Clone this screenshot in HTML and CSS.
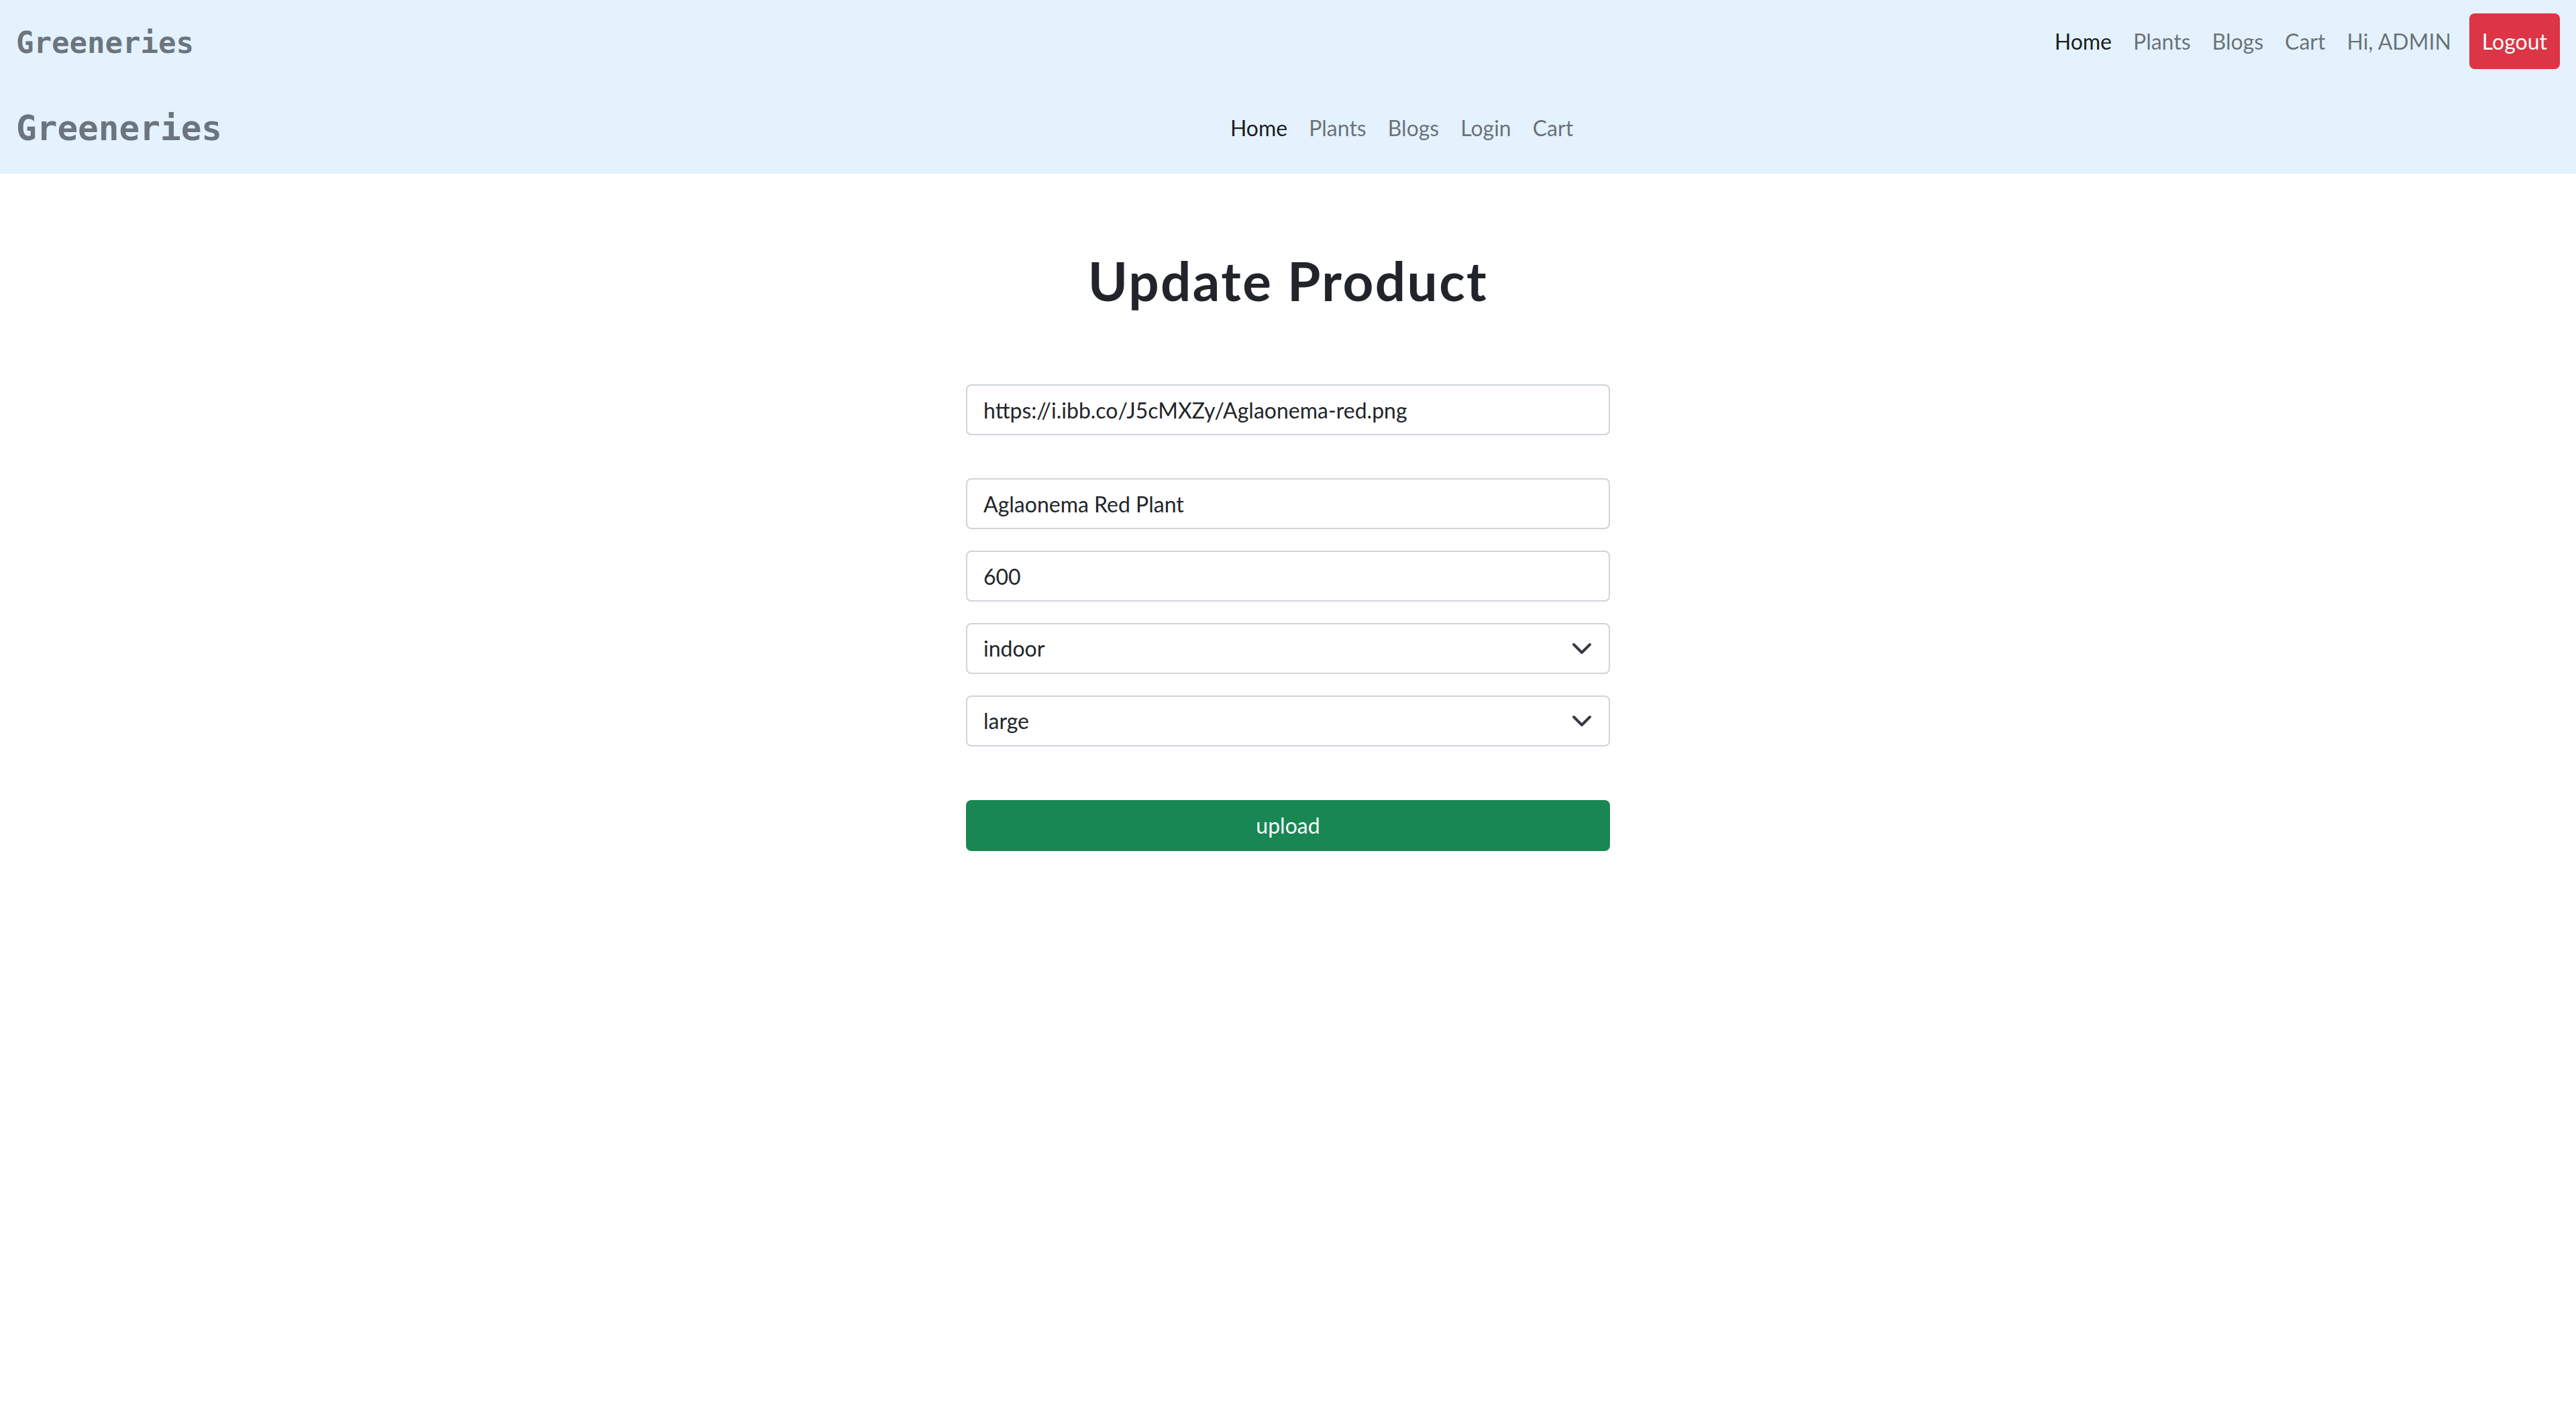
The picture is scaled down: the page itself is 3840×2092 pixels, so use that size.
FILE: index.html
```html
<!DOCTYPE html>
<html lang="en">
<head>
<meta charset="utf-8">
<title>Greeneries - Update Product</title>
<link rel="stylesheet" href="styles.css">
</head>
<body>
<header class="site-header">
  <nav class="navbar navbar-top">
    <a class="brand brand-small" href="#">Greeneries</a>
    <ul class="nav-list nav-right">
      <li><a class="nav-link active" href="#">Home</a></li>
      <li><a class="nav-link" href="#">Plants</a></li>
      <li><a class="nav-link" href="#">Blogs</a></li>
      <li><a class="nav-link" href="#">Cart</a></li>
      <li><span class="nav-link">Hi, ADMIN</span></li>
    </ul>
    <button class="btn-logout" type="button">Logout</button>
  </nav>
  <nav class="navbar navbar-second">
    <a class="brand brand-large" href="#">Greeneries</a>
    <div class="nav-center">
      <ul class="nav-list">
        <li><a class="nav-link active" href="#">Home</a></li>
        <li><a class="nav-link" href="#">Plants</a></li>
        <li><a class="nav-link" href="#">Blogs</a></li>
        <li><a class="nav-link" href="#">Login</a></li>
        <li><a class="nav-link" href="#">Cart</a></li>
      </ul>
    </div>
  </nav>
</header>

<main class="content">
  <h1 class="page-title">Update Product</h1>
  <form class="product-form">
    <input class="form-control field-url" type="text" value="https://i.ibb.co/J5cMXZy/Aglaonema-red.png">
    <input class="form-control field" type="text" value="Aglaonema Red Plant">
    <input class="form-control field" type="text" value="600">
    <div class="select-wrap field">
      <select class="form-select">
        <option selected>indoor</option>
        <option>outdoor</option>
      </select>
      <svg class="chevron" width="32" height="24" viewBox="0 0 16 12" aria-hidden="true">
        <path d="M2 3l6 6 6-6" fill="none" stroke="#343a40" stroke-width="2" stroke-linecap="round" stroke-linejoin="round"/>
      </svg>
    </div>
    <div class="select-wrap field-last">
      <select class="form-select">
        <option>small</option>
        <option>medium</option>
        <option selected>large</option>
      </select>
      <svg class="chevron" width="32" height="24" viewBox="0 0 16 12" aria-hidden="true">
        <path d="M2 3l6 6 6-6" fill="none" stroke="#343a40" stroke-width="2" stroke-linecap="round" stroke-linejoin="round"/>
      </svg>
    </div>
    <button class="btn-upload" type="button">upload</button>
  </form>
</main>
</body>
</html>
```

FILE: styles.css
```css
* {
  box-sizing: border-box;
}

html, body {
  margin: 0;
  padding: 0;
  background: #ffffff;
}

body {
  font-family: "Segoe UI", Lato, "Noto Sans", sans-serif;
  font-size: 32px;
  line-height: 1.5;
  color: #212529;
}

.site-header {
  background: #e3f2fd;
}

.navbar {
  display: flex;
  align-items: center;
  padding: 0 24px;
}

.navbar-top {
  height: 123px;
}

.navbar-second {
  height: 136px;
}

.brand {
  font-family: "DejaVu Sans Mono", "Liberation Mono", monospace;
  font-weight: bold;
  color: #6c757d;
  text-decoration: none;
  line-height: normal;
}

.brand-small {
  font-size: 44px;
  position: relative;
  top: 2px;
}

.brand-large {
  font-size: 51px;
  margin-right: 32px;
}

.nav-list {
  list-style: none;
  margin: 0;
  padding: 0;
  display: flex;
  align-items: center;
}

.nav-right {
  margin-left: auto;
}

.nav-center {
  flex: 1;
  display: flex;
  justify-content: center;
}

.nav-link {
  display: block;
  padding: 0 16px;
  color: rgba(0, 0, 0, 0.55);
  text-decoration: none;
  line-height: 48px;
}

.nav-link.active {
  color: rgba(0, 0, 0, 0.9);
}

.btn-logout {
  margin-left: 11px;
  height: 83px;
  padding: 0 19px;
  border: 0;
  border-radius: 8px;
  background: #dc3545;
  color: #ffffff;
  font-family: inherit;
  font-size: 32px;
  line-height: 48px;
}

.content {
  width: 960px;
  margin: 0 auto;
}

.page-title {
  margin: 111px 0 107px;
  font-size: 80px;
  font-weight: 700;
  line-height: 96px;
  letter-spacing: 2.4px;
  text-align: center;
  color: #212529;
}

.product-form {
  display: flex;
  flex-direction: column;
}

.form-control,
.form-select {
  display: block;
  width: 100%;
  height: 76px;
  padding: 12px 24px;
  border: 2px solid #ced4da;
  border-radius: 8px;
  background: #ffffff;
  color: #212529;
  font-family: inherit;
  font-size: 32px;
  line-height: 48px;
  outline: none;
}

.form-select {
  appearance: none;
  -webkit-appearance: none;
  padding-right: 72px;
}

.field-url {
  margin-bottom: 64px;
}

.field {
  margin-bottom: 32px;
}

.field-last {
  margin-bottom: 80px;
}

.select-wrap {
  position: relative;
}

.chevron {
  position: absolute;
  right: 26px;
  top: 26px;
  pointer-events: none;
}

.btn-upload {
  width: 100%;
  height: 76px;
  border: 0;
  border-radius: 8px;
  background: #198754;
  color: #ffffff;
  font-family: inherit;
  font-size: 32px;
  line-height: 48px;
}
```
